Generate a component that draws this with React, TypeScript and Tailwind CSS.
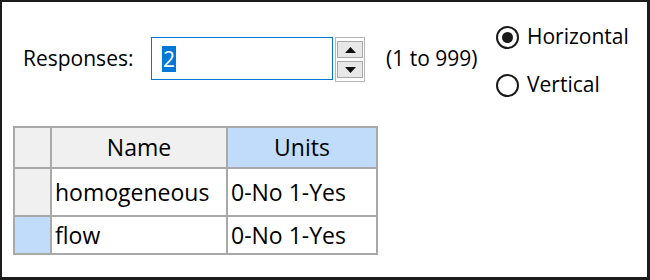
export default function App() {
    const font = { fontFamily: '"Open Sans", "Noto Sans", sans-serif' };
    return (
        <div
            className="w-[650px] h-[280px] bg-white border-l-2 border-t-2 border-r-[3px] border-b-[3px] border-[#1c1c1c] text-[21px] text-black flex flex-col"
            style={font}
        >
            {/* top row: responses spinner + orientation radios */}
            <div className="h-[124px] flex items-start">
                <div className="mt-[35px] flex items-start">
                    <div className="w-[149px] h-[43px] pl-[21px] flex items-center">Responses:</div>
                    <div className="w-[182px] h-[43px] border border-[#0078d7] flex items-center pl-[10px]">
                        <span className="bg-[#0078d7] text-white leading-[26px] px-[1px]">2</span>
                    </div>
                    <div className="ml-[2px] w-[30px] h-[45px] border border-[#b5b5b5] flex flex-col items-center justify-center gap-[3px]">
                        <div className="w-[26px] h-[17px] border border-[#a8a8a8] bg-[#e8e8e8] flex items-center justify-center">
                            <svg width="11" height="6" viewBox="0 0 11 6"><path d="M0 6 L5.5 0 L11 6 Z" fill="#111" /></svg>
                        </div>
                        <div className="w-[26px] h-[17px] border border-[#a8a8a8] bg-[#e8e8e8] flex items-center justify-center">
                            <svg width="11" height="6" viewBox="0 0 11 6"><path d="M0 0 L5.5 6 L11 0 Z" fill="#111" /></svg>
                        </div>
                    </div>
                    <div className="ml-[21px] w-[110px] h-[43px] flex items-center">(1 to 999)</div>
                </div>
                <div className="mt-[23px] flex flex-col gap-[24px]">
                    <div className="h-[24px] flex items-center gap-[8px]">
                        <div className="w-[23px] h-[23px] rounded-full border-2 border-[#1a1a1a] flex items-center justify-center">
                            <div className="w-[11px] h-[11px] rounded-full bg-[#1a1a1a]" />
                        </div>
                        <span>Horizontal</span>
                    </div>
                    <div className="h-[24px] flex items-center gap-[8px]">
                        <div className="w-[23px] h-[23px] rounded-full border-2 border-[#1a1a1a]" />
                        <span>Vertical</span>
                    </div>
                </div>
            </div>

            {/* grid */}
            <div className="ml-[11px] grid grid-cols-[37px_176px_150px] grid-rows-[41px_48px_38px] w-fit border-l-2 border-t-2 border-[#a9a9a9] text-[23px]">
                <div className="bg-[#f0f0f0] border-r-2 border-b-2 border-[#a9a9a9]" />
                <div className="bg-[#f0f0f0] border-r-2 border-b-2 border-[#a9a9a9] flex items-center justify-center">Name</div>
                <div className="bg-[#c1dcfb] border-r-2 border-b-2 border-[#a9a9a9] flex items-center justify-center">Units</div>

                <div className="bg-[#f0f0f0] border-r-2 border-b-2 border-[#a9a9a9]" />
                <div className="border-r-2 border-b-2 border-[#a9a9a9] flex items-center pl-[3px]">homogeneous</div>
                <div className="border-r-2 border-b-2 border-[#a9a9a9] flex items-center pl-[3px]">0-No 1-Yes</div>

                <div className="bg-[#c1dcfb] border-r-2 border-b-2 border-[#a9a9a9]" />
                <div className="border-r-2 border-b-2 border-[#a9a9a9] flex items-center pl-[3px]">flow</div>
                <div className="border-r-2 border-b-2 border-[#a9a9a9] flex items-center pl-[3px]">0-No 1-Yes</div>
            </div>
        </div>
    );
}
